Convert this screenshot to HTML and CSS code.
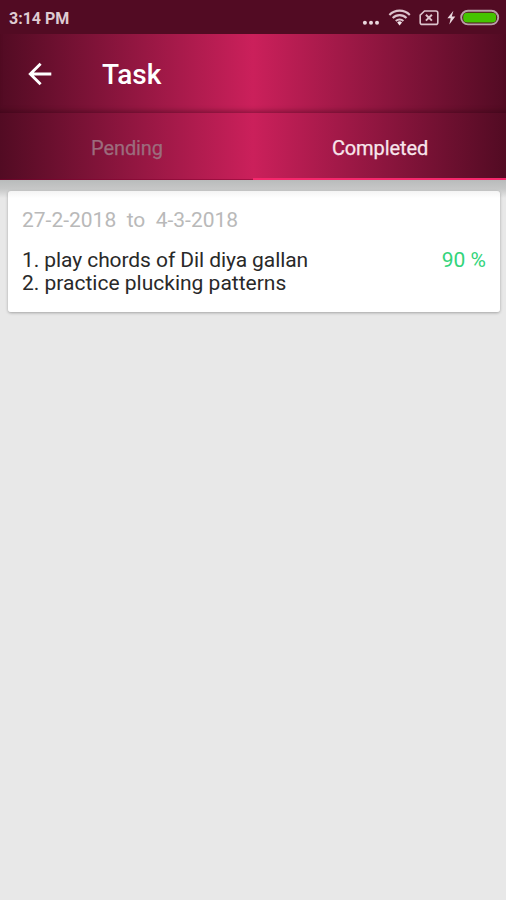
FILE: index.html
```html
<!DOCTYPE html>
<html lang="en">
<head>
<meta charset="utf-8">
<title>Task</title>
<link rel="stylesheet" href="styles.css">
</head>
<body>
<div class="status">
  <span class="clock">3:14 PM</span>
  <svg class="status-icons" width="140" height="34" viewBox="360 0 140 34" fill="none" stroke="#dcc3cc">
    <g fill="#ead8de" stroke="none"><circle cx="364.900" cy="22.700" r="2"/><circle cx="371" cy="22.700" r="2"/><circle cx="377" cy="22.700" r="2"/></g>
    <g stroke-width="2.100"><path d="M389.400 14.900a14.200 14.200 0 0 1 20.400 0"/><path d="M392.700 18.100a9.600 9.600 0 0 1 13.800 0"/><path d="M395.800 21.100a5.400 5.400 0 0 1 7.600 0"/></g>
    <path d="M397.200 22.400a3.400 3.400 0 0 1 4.800 0l-2.400 3z" fill="#f4e6eb" stroke="none"/>
    <path d="M424.500 11h11.300q2 0 2 2v9.400q0 2-2 2h-13.600q-2 0-2-2v-7.200z" stroke-width="1.600"/>
    <path d="M425.900 14.800l6 5.800m0-5.800l-6 5.800" stroke-width="2"/>
    <path d="M453.400 10.800l-6 7.400h3.300l-1.400 6.200 6-8h-3.500z" fill="#ead8de" stroke="none"/>
    <rect x="461.200" y="10.800" width="37" height="13.600" rx="6.800" stroke="#baa0a8" stroke-width="1.900"/>
    <rect x="463.200" y="12.800" width="33" height="9.600" rx="4" fill="#45c400" stroke="none"/>
  </svg>
</div>
<header class="toolbar">
  <svg class="back" width="24" height="24" viewBox="0 0 24 24" fill="none" stroke="#fff" stroke-width="2.900"><path d="M23.300 12H2.500M12.600 1.700L2.300 12l10.300 10.300"/></svg>
  <h1 class="title">Task</h1>
</header>
<nav class="tabs">
  <div class="tab"><span class="pending">Pending</span></div>
  <div class="tab active"><span class="completed">Completed</span></div>
</nav>
<main class="content">
  <article class="card">
    <div class="dates"><span class="range">27-2-2018&nbsp; to&nbsp; 4-3-2018</span></div>
    <div class="row">
      <div class="tasks"><div><span class="first">1. play chords of Dil diya gallan</span></div><div><span class="second">2. practice plucking patterns</span></div></div>
      <span class="percent">90 %</span>
    </div>
  </article>
</main>
</body>
</html>
```
FILE: styles.css
```css
* { box-sizing: border-box; }
body {
  margin: 0;
  height: 900px;
  display: flex;
  flex-direction: column;
  overflow: hidden;
  background: #e8e8e8;
  font-family: Roboto, sans-serif;
}
.status {
  height: 34px;
  flex: none;
  display: flex;
  align-items: center;
  justify-content: space-between;
  padding: 0 6px 0 9px;
  background: #520b23;
}
.clock {
  padding-top: 2px;
  color: #dfcbd2;
  font-size: 16px;
  font-weight: 700;
}
.status-icons { display: block; }
.toolbar, .tabs {
  flex: none;
  display: flex;
  background: linear-gradient(90deg, #520b23 0%, #cb205b 50%, #520b23 100%);
}
.toolbar {
  height: 79px;
  align-items: center;
  padding: 0 0 0 27px;
  box-shadow: inset 0 -5px 5px -3px rgba(40, 0, 15, .4);
}
.back { display: block; margin-left: 1px; }
.title {
  margin: 3px 0 0 50px;
  color: #fff;
  font-size: 28px;
  font-weight: 500;
  line-height: 32px;
}
.tabs {
  height: 67px;
}
.tab {
  flex: 1;
  display: flex;
  align-items: center;
  justify-content: center;
  padding: 3px 0 0 1px;
  font-size: 20px;
  box-shadow: inset 0 -1px rgba(130, 0, 45, .5);
}
.pending { color: #9c6c7d; -webkit-text-stroke: .25px #9c6c7d; letter-spacing: -.1px; }
.completed { color: #f8e6ec; -webkit-text-stroke: .25px #f8e6ec; letter-spacing: -.1px; }
.active { box-shadow: inset 0 -2px #f5286c; }
.content {
  padding: 11px 6px 0 8px;
  background: linear-gradient(#b9bbbb, #c6c7c7 9px, #e8e8e8 18px) no-repeat;
}
.card {
  height: 121px;
  padding: 16px 14px 0;
  border-radius: 3px;
  background: linear-gradient(#f4f4f4, #fff 7px);
  box-shadow: 0 1px 3px rgba(0, 0, 0, .3);
}
.dates {
  color: #b9b9b9;
  font-size: 21px;
  line-height: 26px;
}
.row {
  display: flex;
  justify-content: space-between;
  margin-top: 16px;
  color: #292929;
  font-size: 21px;
  line-height: 23px;
}
.first { letter-spacing: -.08px; }
.percent { color: #32d47a; }
```
